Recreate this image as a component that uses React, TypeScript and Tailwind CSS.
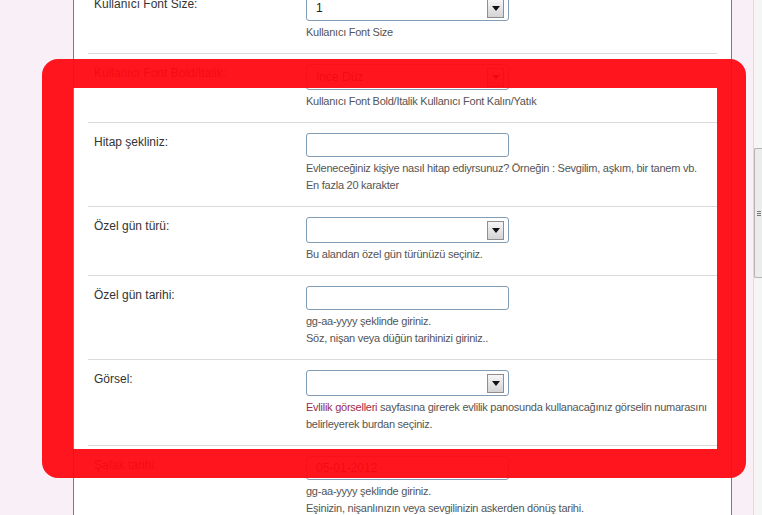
import React from 'react'

type Row = {
  label: string
  kind: 'select' | 'input'
  value?: string
  hints: React.ReactNode[]
}

const rows: Row[] = [
  { label: 'Kullanıcı Font Size:', kind: 'select', value: '1', hints: ['Kullanıcı Font Size'] },
  {
    label: 'Kullanıcı Font Bold/Italik:',
    kind: 'select',
    value: 'İnce Düz',
    hints: ['Kullanıcı Font Bold/Italik Kullanıcı Font Kalın/Yatık'],
  },
  {
    label: 'Hitap şekliniz:',
    kind: 'input',
    hints: [
      'Evleneceğiniz kişiye nasıl hitap ediyrsunuz? Örneğin : Sevgilim, aşkım, bir tanem vb.',
      'En fazla 20 karakter',
    ],
  },
  { label: 'Özel gün türü:', kind: 'select', hints: ['Bu alandan özel gün türünüzü seçiniz.'] },
  {
    label: 'Özel gün tarihi:',
    kind: 'input',
    hints: ['gg-aa-yyyy şeklinde giriniz.', 'Söz, nişan veya düğün tarihinizi giriniz..'],
  },
  {
    label: 'Görsel:',
    kind: 'select',
    hints: [
      <>
        <span className="text-[#9b2d4b]">Evlilik görselleri</span> sayfasına girerek evlilik panosunda kullanacağınız
        görselin numarasını
      </>,
      'belirleyerek burdan seçiniz.',
    ],
  },
  {
    label: 'Şafak tarihi:',
    kind: 'input',
    value: '05-01-2012',
    hints: ['gg-aa-yyyy şeklinde giriniz.', 'Eşinizin, nişanlınızın veya sevgilinizin askerden dönüş tarihi.'],
  },
]

function SelectBox({ value }: { value?: string }) {
  return (
    <div className="flex h-[26px] w-[203px] items-center justify-between rounded-[3px] border border-[#7f9db9] bg-white pl-[9px] pr-[4px]">
      <span className="text-[12px] text-[#222]">{value}</span>
      <div className="flex h-[19px] w-[17px] items-center justify-center border border-[#8e8e8e] bg-gradient-to-b from-[#f6f6f6] to-[#d4d4d4]">
        <div className="h-0 w-0 border-x-[4px] border-t-[5px] border-x-transparent border-t-[#111]" />
      </div>
    </div>
  )
}

function TextBox({ value }: { value?: string }) {
  return (
    <div className="flex h-[24px] w-[203px] items-center rounded-[3px] border border-[#7f9db9] bg-white pl-[9px]">
      <span className="text-[12px] text-[#222]">{value}</span>
    </div>
  )
}

export default function App() {
  return (
    <div className="relative flex h-[515px] w-[762px] overflow-hidden bg-[#f9eff7] font-['Liberation_Sans',Arial,sans-serif]">
      <div className="w-[73px] shrink-0" />

      {/* panel */}
      <div className="w-[659px] shrink-0 border-x border-[#6d7c99] bg-white">
        <div className="mx-[14px] -mt-[15px]">
          {rows.map((r, i) => (
            <div key={i} className="flex border-b border-[#dadada] pb-[12px] pt-[10px]">
              <div className="w-[218px] shrink-0 pl-[6px] pt-[2px] text-[12px] leading-[15px] text-[#333]">{r.label}</div>
              <div className="min-w-0">
                {r.kind === 'select' ? <SelectBox value={r.value} /> : <TextBox value={r.value} />}
                <div className="mt-[3px] whitespace-nowrap text-[11px] leading-[17px] tracking-[-0.25px] text-[#555]">
                  {r.hints.map((h, j) => (
                    <div key={j}>{h}</div>
                  ))}
                </div>
              </div>
            </div>
          ))}
        </div>
      </div>

      <div className="w-[21px] shrink-0" />

      {/* scrollbar */}
      <div className="w-[9px] shrink-0 border-l border-[#dcdcdc] bg-[#f5f5f5] pt-[148px]">
        <div className="flex h-[130px] flex-col items-center justify-center gap-[1px] rounded-l-[2px] border border-r-0 border-[#b4b4b4] bg-[#ececec]">
          <div className="h-px w-[4px] bg-[#777]" />
          <div className="h-px w-[4px] bg-[#777]" />
          <div className="h-px w-[4px] bg-[#777]" />
        </div>
      </div>

      {/* red annotation */}
      <div className="pointer-events-none absolute left-[42px] top-[59px] h-[419px] w-[704px] rounded-[16px] border-[29px] border-l-[31px] border-[rgba(255,8,18,0.95)] blur-[0.6px]" />
    </div>
  )
}
